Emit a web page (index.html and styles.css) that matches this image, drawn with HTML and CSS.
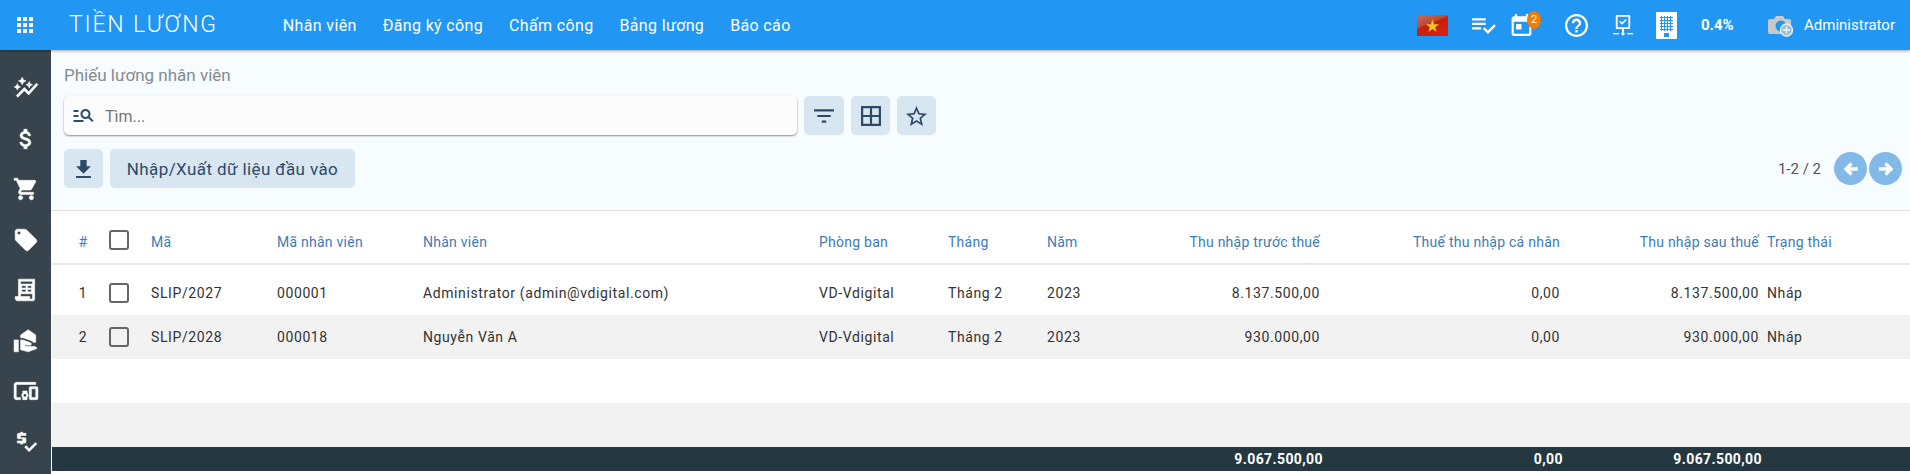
FILE: index.html
```html
<!DOCTYPE html>
<html lang="vi">
<head>
    <meta charset="UTF-8">
    <meta name="viewport" content="width=device-width, initial-scale=1.0">
    <title>Tiền lương</title>
    <link rel="stylesheet" href="styles.css">
</head>
<body>
    <header class="topbar">
        <svg class="apps-icon" viewBox="3 3 18 18"><path d="M4 8h4V4H4v4zm6 12h4v-4h-4v4zm-6 0h4v-4H4v4zm0-6h4v-4H4v4zm6 0h4v-4h-4v4zm6-10v4h4V4h-4zm-6 4h4V4h-4v4zm6 6h4v-4h-4v4zm0 6h4v-4h-4v4z"/></svg>
        <div class="app-title">TIỀN LƯƠNG</div>
        <nav class="nav">
            <a>Nhân viên</a>
            <a>Đăng ký công</a>
            <a>Chấm công</a>
            <a>Bảng lương</a>
            <a>Báo cáo</a>
        </nav>
        <div class="top-right">
            <svg class="flag" viewBox="0 0 31 21">
                <defs>
                    <linearGradient id="flagbg" x1="0" y1="0" x2="0.6" y2="1">
                        <stop offset="0" stop-color="#c9685a"/>
                        <stop offset="0.45" stop-color="#bf4a38"/>
                        <stop offset="0.5" stop-color="#c41f0d"/>
                        <stop offset="1" stop-color="#d6230f"/>
                    </linearGradient>
                </defs>
                <rect width="31" height="21" fill="url(#flagbg)"/>
                <polygon points="15.5,4.5 17.2,9.2 22,9.2 18.2,12.2 19.6,17 15.5,14.1 11.4,17 12.8,12.2 9,9.2 13.8,9.2" fill="#f7c520"/>
            </svg>
            <svg class="top-icon check-list" viewBox="2 5 21 15"><path d="M14 10H2v2h12v-2zm0-4H2v2h12V6zM2 16h8v-2H2v2zm19.5-4.5L23 13l-6.99 7-4.51-4.5L13 14l3.01 3 5.49-5.5z"/></svg>
            <div class="calendar">
                <svg class="top-icon" viewBox="3 1 18 20"><path d="M19 3h-1V1h-2v2H8V1H6v2H5c-1.11 0-1.99.9-1.99 2L3 19c0 1.1.89 2 2 2h14c1.1 0 2-.9 2-2V5c0-1.1-.9-2-2-2zm0 16H5V8h14v11zM7 10h5v5H7z"/></svg>
                <span class="badge">2</span>
            </div>
            <svg class="top-icon help" viewBox="2 2 20 20"><path d="M11 18h2v-2h-2v2zm1-16C6.48 2 2 6.48 2 12s4.48 10 10 10 10-4.48 10-10S17.52 2 12 2zm0 18c-4.41 0-8-3.59-8-8s3.59-8 8-8 8 3.59 8 8-3.59 8-8 8zm0-14c-2.21 0-4 1.79-4 4h2c0-1.1.9-2 2-2s2 .9 2 2c0 2-3 1.75-3 5h2c0-2.25 3-2.5 3-5 0-2.21-1.79-4-4-4z"/></svg>
            <svg class="top-icon network" viewBox="0 0 20 21">
                <path d="M4 0h12a1.2 1.2 0 0 1 1.2 1.2v11.6A1.2 1.2 0 0 1 16 14h-5v3.2H9V14H4a1.2 1.2 0 0 1-1.2-1.2V1.200A1.2 1.2 0 0 1 4 0zm.6 1.800v10.400h10.800V1.800H4.600z"/>
                <path d="M6.200 6.800l1.100-1.100 1.800 1.800 3.600-3.600 1.100 1.100-4.700 4.700z"/>
                <rect x="0" y="18" width="6" height="1.400"/><rect x="14" y="18" width="6" height="1.400"/>
                <circle cx="10" cy="18.700" r="1.700"/>
            </svg>
            <div class="building">
                <span class="windows"></span>
                <span class="door"></span>
            </div>
            <div class="percent">0.4%</div>
            <svg class="camera" viewBox="0 0 26 23">
                <path d="M2 5h4l2-3h7l2 3h4a2 2 0 0 1 2 2v11a2 2 0 0 1-2 2H2a2 2 0 0 1-2-2V7a2 2 0 0 1 2-2z" fill="#c9c9c9"/>
                <circle cx="13" cy="12" r="5.500" fill="#2196f3"/>
                <circle cx="18.500" cy="16" r="6" fill="#9ebfd9" stroke="#eef2f5" stroke-width="1.300"/>
                <path d="M18.500 12.500v7M15 16h7" stroke="#eef2f5" stroke-width="1.300"/>
            </svg>
            <div class="user">Administrator</div>
        </div>
    </header>

    <div class="main">
        <aside class="sidebar">
            <a><svg viewBox="0 0 24 24"><path d="M14.06 9.94L12 9l2.06-.94L15 6l.94 2.06L18 9l-2.06.94L15 12l-.94-2.06zM4 14l.94-2.06L7 11l-2.06-.94L4 8l-.94 2.06L1 11l2.06.94L4 14zm4.5-5l1.09-2.41L12 5.5 9.59 4.41 8.5 2 7.41 4.41 5 5.5l2.41 1.09L8.5 9zm-4 11.5l6-6.01 4 4L23 8.93l-1.41-1.41-7.09 7.97-4-4L3 19l1.5 1.5z"/></svg></a>
            <a><svg viewBox="0 0 24 24"><path d="M11.8 10.9c-2.27-.59-3-1.2-3-2.15 0-1.09 1.01-1.85 2.7-1.85 1.78 0 2.44.85 2.5 2.1h2.21c-.07-1.72-1.12-3.3-3.21-3.81V3h-3v2.16c-1.94.42-3.5 1.68-3.5 3.61 0 2.31 1.91 3.46 4.7 4.13 2.5.6 3 1.48 3 2.41 0 .69-.49 1.79-2.7 1.79-2.06 0-2.87-.92-2.98-2.1h-2.2c.12 2.19 1.76 3.42 3.68 3.83V21h3v-2.15c1.95-.37 3.5-1.5 3.5-3.55 0-2.84-2.43-3.81-4.7-4.4z"/></svg></a>
            <a><svg viewBox="0 0 24 24"><path d="M7 18c-1.1 0-1.99.9-1.99 2S5.9 22 7 22s2-.9 2-2-.9-2-2-2zM1 2v2h2l3.6 7.59-1.35 2.45c-.16.28-.25.61-.25.96 0 1.1.9 2 2 2h12v-2H7.42c-.14 0-.25-.11-.25-.25l.03-.12.9-1.63h7.45c.75 0 1.41-.41 1.75-1.03l3.58-6.49c.08-.14.12-.31.12-.48 0-.55-.45-1-1-1H5.21l-.94-2H1zm16 16c-1.1 0-1.99.9-1.99 2s.89 2 1.99 2 2-.9 2-2-.9-2-2-2z"/></svg></a>
            <a><svg viewBox="0 0 24 24"><path d="M21.41 11.58l-9-9C12.05 2.22 11.55 2 11 2H4c-1.1 0-2 .9-2 2v7c0 .55.22 1.05.59 1.42l9 9c.36.36.86.58 1.41.58.55 0 1.05-.22 1.41-.59l7-7c.37-.36.59-.86.59-1.41 0-.55-.23-1.06-.59-1.42zM5.5 7C4.67 7 4 6.33 4 5.5S4.67 4 5.5 4 7 4.67 7 5.5 6.33 7 5.500 7z"/></svg></a>
            <a><svg viewBox="0 0 24 24"><path fill-rule="evenodd" d="M5 2h15v18c0 1.200-.6 2-1.500 2H4.500C3 22 2 21 2 19.500V18h3V2zm2 2v2.500h11V4H7zm1 4v2.200h4V8H8zm5.500 0v2.200H17V8h-3.500zM8 11.500v2.200h4v-2.200H8zm5.500 0v2.200H17v-2.200h-3.500zM7 15.500V18h8.500v1.500c0 .4.100.6.300.9H18V15.500H7z"/></svg></a>
            <a><svg viewBox="0 0 24 24"><path fill-rule="evenodd" d="M1 22h4V11H1v11zm19-5h-7l-2.090-.73.33-.94L13 16h2.820c.65 0 1.180-.53 1.180-1.180 0-.49-.31-.93-.77-1.110L8.970 11H7v9.020L14 22l8-3c-.01-1.100-.89-2-2-2zM14 1.500l-7 5V9h2c.26 0 .58.060.74.120l7.210 2.660c.68.250 1.200.8 1.460 1.450H21V6.500l-7-5z"/></svg></a>
            <a><svg viewBox="0 0 24 24"><path d="M3 6h18V4H3c-1.100 0-2 .9-2 2v12c0 1.100.9 2 2 2h4v-2H3V6zm10 6H9v1.780c-.61.55-1 1.330-1 2.220s.39 1.670 1 2.220V20h4v-1.780c.61-.55 1-1.340 1-2.220s-.39-1.670-1-2.220V12zm-2 5.500c-.83 0-1.500-.67-1.500-1.500s.67-1.500 1.500-1.500 1.500.67 1.500 1.500-.67 1.500-1.500 1.500zM22 8h-6c-.5 0-1 .5-1 1v10c0 .5.5 1 1 1h6c.5 0 1-.5 1-1V9c0-.5-.5-1-1-1zm-1 10h-4v-8h4v8z"/></svg></a>
            <a><svg viewBox="0 0 24 24"><path d="M11 13c.55 0 1-.45 1-1V9c0-.55-.45-1-1-1H7V6h5V4H9V3H7v1H5c-.55 0-1 .45-1 1v3c0 .55.45 1 1 1h4v2H4v2h3v1h2v-1h2zm9.590-.5l-5.660 5.660-2.830-2.830-1.410 1.410 4.240 4.250 7.070-7.070z"/></svg></a>
        </aside>

        <div class="content">
            <section class="panel">
                <div class="page-title">Phiếu lương nhân viên</div>
                <div class="search-row">
                    <div class="search-box">
                        <svg class="search-icon" viewBox="2 6 20 14"><path d="M7 9H2V7h5v2zm0 3H2v2h5v-2zm13.590 7l-3.830-3.830c-.8.52-1.740.83-2.760.83-2.760 0-5-2.240-5-5s2.240-5 5-5 5 2.240 5 5c0 1.020-.31 1.960-.83 2.750L22 17.590 20.590 19zM17 11c0-1.650-1.350-3-3-3s-3 1.350-3 3 1.350 3 3 3 3-1.350 3-3zM2 19h10v-2H2v2z"/></svg>
                        <span class="search-text">Tìm...</span>
                    </div>
                    <button class="btn-icon filter-btn"><svg viewBox="3 6 18 12" class="icon-filter"><path d="M10 18h4v-2h-4v2zM3 6v2h18V6H3zm3 7h12v-2H6v2z"/></svg></button>
                    <button class="btn-icon"><svg viewBox="3 3 18 18" class="icon-grid"><path d="M3 3v18h18V3H3zm8 16H5v-6h6v6zm0-8H5V5h6v6zm8 8h-6v-6h6v6zm0-8h-6V5h6v6z"/></svg></button>
                    <button class="btn-icon"><svg viewBox="2 2 20 19" class="icon-star"><path d="M22 9.240l-7.190-.62L12 2 9.190 8.630 2 9.240l5.460 4.730L5.820 21 12 17.270 18.180 21l-1.630-7.030L22 9.240zM12 15.400l-3.760 2.270 1-4.280-3.320-2.880 4.380-.38L12 6.100l1.710 4.040 4.380.38-3.320 2.880 1 4.280L12 15.400z"/></svg></button>
                </div>
                <div class="action-row">
                    <button class="btn-icon"><svg viewBox="5 3 14 17" class="icon-download"><path d="M19 9h-4V3H9v6H5l7 7 7-7zM5 18v2h14v-2H5z"/></svg></button>
                    <button class="btn-text">Nhập/Xuất dữ liệu đầu vào</button>
                    <div class="pager">
                        <span class="pager-text">1-2 / 2</span>
                        <span class="pager-btn"><svg viewBox="0 0 16 16"><path d="M15 8H4M8.500 2.500L3 8l5.500 5.500" fill="none" stroke="#fff" stroke-width="3.400"/></svg></span>
                        <span class="pager-btn"><svg viewBox="0 0 16 16"><path d="M1 8h11M7.500 2.500L13 8l-5.500 5.500" fill="none" stroke="#fff" stroke-width="3.400"/></svg></span>
                    </div>
                </div>
            </section>

            <table class="data-table">
                <colgroup>
                    <col class="c-no"><col class="c-check"><col class="c-code"><col class="c-empcode"><col class="c-name"><col class="c-dept"><col class="c-month"><col class="c-year"><col class="c-gross"><col class="c-tax"><col class="c-net"><col>
                </colgroup>
                <thead>
                    <tr>
                        <th class="no">#</th>
                        <th class="check"><span class="checkbox"></span></th>
                        <th>Mã</th>
                        <th>Mã nhân viên</th>
                        <th>Nhân viên</th>
                        <th>Phòng ban</th>
                        <th>Tháng</th>
                        <th>Năm</th>
                        <th class="num">Thu nhập trước thuế</th>
                        <th class="num">Thuế thu nhập cá nhân</th>
                        <th class="num">Thu nhập sau thuế</th>
                        <th class="status">Trạng thái</th>
                    </tr>
                </thead>
                <tbody>
                    <tr>
                        <td class="no">1</td>
                        <td class="check"><span class="checkbox"></span></td>
                        <td>SLIP/2027</td>
                        <td>000001</td>
                        <td>Administrator (admin@vdigital.com)</td>
                        <td>VD-Vdigital</td>
                        <td>Tháng 2</td>
                        <td>2023</td>
                        <td class="num">8.137.500,00</td>
                        <td class="num">0,00</td>
                        <td class="num">8.137.500,00</td>
                        <td class="status">Nháp</td>
                    </tr>
                    <tr class="shade">
                        <td class="no">2</td>
                        <td class="check"><span class="checkbox"></span></td>
                        <td>SLIP/2028</td>
                        <td>000018</td>
                        <td>Nguyễn Văn A</td>
                        <td>VD-Vdigital</td>
                        <td>Tháng 2</td>
                        <td>2023</td>
                        <td class="num">930.000,00</td>
                        <td class="num">0,00</td>
                        <td class="num">930.000,00</td>
                        <td class="status">Nháp</td>
                    </tr>
                    <tr><td colspan="12"></td></tr>
                    <tr class="shade"><td colspan="12"></td></tr>
                </tbody>
                <tfoot>
                    <tr>
                        <td colspan="8"></td>
                        <td class="num">9.067.500,00</td>
                        <td class="num">0,00</td>
                        <td class="num">9.067.500,00</td>
                        <td></td>
                    </tr>
                </tfoot>
            </table>
        </div>
    </div>
</body>
</html>
```

FILE: styles.css
```css
* {
    box-sizing: border-box;
}

html, body {
    height: 100%;
}

body {
    margin: 0;
    font-family: 'Roboto', 'Liberation Sans', sans-serif;
    font-size: 14px;
    color: #333;
    background-color: #fff;
    overflow: hidden;
}

/* top bar */
.topbar {
    height: 50px;
    background-color: #2196f3;
    box-shadow: 0 1px 3px rgba(0, 0, 0, 0.35);
    display: flex;
    align-items: center;
    color: #fff;
    padding: 0 15px 0 16px;
    position: relative;
    z-index: 2;
}

.apps-icon {
    width: 18px;
    height: 18px;
    fill: #fff;
    margin-top: -1px;
}

.app-title {
    font-size: 23px;
    letter-spacing: 1.8px;
    font-weight: 300;
    margin-left: 35px;
    margin-top: -2px;
}

.nav {
    display: flex;
    gap: 26px;
    margin-left: 65px;
    font-size: 16px;
    letter-spacing: 0.35px;
}

.top-right {
    margin-left: auto;
    display: flex;
    align-items: center;
}

.flag {
    width: 31px;
    height: 21px;
    margin-right: 24px;
}

.top-icon {
    fill: #fff;
    display: block;
}

.check-list {
    width: 24px;
    height: 17px;
    margin-right: 15px;
}

.calendar {
    position: relative;
    margin-right: 33px;
}

.calendar .top-icon {
    width: 21px;
    height: 22px;
}

.badge {
    position: absolute;
    top: -3px;
    left: 16px;
    width: 14px;
    height: 18px;
    border-radius: 50%;
    background-color: #f57c00;
    font-size: 11px;
    line-height: 17px;
    text-align: center;
}

.help {
    width: 23px;
    height: 23px;
    margin-right: 25px;
}

.network {
    width: 20px;
    height: 21px;
    margin-right: 23px;
}

.building {
    width: 21px;
    height: 27px;
    background-color: #fff;
    border-radius: 1px;
    position: relative;
    margin-right: 24px;
}

.windows {
    position: absolute;
    top: 4px;
    left: 4px;
    width: 13px;
    height: 15px;
    background-image: radial-gradient(circle, #2196f3 1px, transparent 1.1px);
    background-size: 3px 3px;
}

.door {
    position: absolute;
    left: 8px;
    bottom: 2px;
    width: 5px;
    height: 4px;
    background-color: #2196f3;
}

.percent {
    font-size: 15px;
    font-weight: 700;
    width: 67px;
}

.camera {
    width: 26px;
    height: 23px;
    margin-right: 10px;
}

.user {
    font-size: 15px;
}

.main {
    display: flex;
    height: 424px;
}

/* left icons */
.sidebar {
    width: 51px;
    flex-shrink: 0;
    background-color: #37444d;
    padding-top: 13px;
}

.sidebar a {
    height: 50.5px;
    display: flex;
    align-items: center;
    justify-content: center;
}

.sidebar svg {
    width: 26px;
    height: 26px;
    fill: #fff;
    stroke: #fff;
    stroke-width: 0.5;
}

.content {
    flex: 1;
    min-width: 0;
}

/* search panel */
.panel {
    height: 161px;
    background-color: #f7fcff;
    border-bottom: 1px solid #e0e0e0;
    padding: 15px 8px 0 13px;
}

.page-title {
    font-size: 17px;
    color: #858a8f;
    height: 31px;
    line-height: 21px;
}

.search-row {
    display: flex;
    gap: 7px;
    height: 39px;
}

.search-box {
    width: 733px;
    background-color: #fcfcfc;
    border-radius: 5px;
    box-shadow: 0 1px 2px rgba(0, 0, 0, 0.45);
    display: flex;
    align-items: center;
    padding-left: 9px;
}

.search-icon {
    width: 21px;
    height: 14px;
    fill: #2d4a68;
}

.search-text {
    font-size: 16px;
    color: #767676;
    margin: 1px 0 0 11px;
}

.btn-icon {
    width: 39px;
    height: 39px;
    border: none;
    border-radius: 5px;
    background-color: #d7e6f1;
    padding: 0;
    display: flex;
    align-items: center;
    justify-content: center;
}

.filter-btn {
    width: 40px;
}

.btn-icon svg {
    fill: #2d4a68;
}

.icon-filter {
    width: 20px;
    height: 14px;
}

.icon-grid {
    width: 20px;
    height: 20px;
}

.icon-star {
    width: 21px;
    height: 20px;
}

.icon-download {
    width: 15px;
    height: 18px;
}

.action-row {
    display: flex;
    align-items: center;
    gap: 7px;
    margin-top: 14px;
}

.btn-text {
    height: 39px;
    width: 245px;
    border: none;
    border-radius: 5px;
    background-color: #d7e6f1;
    color: #2d4a68;
    font-family: inherit;
    font-size: 17px;
    letter-spacing: 0.4px;
    padding: 0;
}

.pager {
    margin-left: auto;
    display: flex;
    align-items: center;
    gap: 2px;
}

.pager-text {
    font-size: 15px;
    color: #555;
    margin-right: 11px;
}

.pager-btn {
    width: 33px;
    height: 33px;
    border-radius: 50%;
    background-color: #82b9e8;
    display: flex;
    align-items: center;
    justify-content: center;
}

.pager-btn svg {
    width: 16px;
    height: 16px;
}

/* table */
.data-table {
    width: calc(100% - 1px);
    margin-left: 1px;
    table-layout: fixed;
    border-collapse: collapse;
    font-size: 14px;
    letter-spacing: 0.6px;
}

.c-no { width: 46px; }
.c-check { width: 45px; }
.c-code { width: 126px; }
.c-empcode { width: 146px; }
.c-name { width: 396px; }
.c-dept { width: 129px; }
.c-month { width: 99px; }
.c-year { width: 97px; }
.c-gross { width: 192px; }
.c-tax { width: 240px; }
.c-net { width: 199px; }

.data-table th,
.data-table td {
    padding: 0 8px;
    text-align: left;
    font-weight: 400;
}

.data-table th {
    height: 53px;
    color: #3f7cb0;
    letter-spacing: 0.25px;
    border-bottom: 2px solid #e4e6e8;
    padding-top: 9px;
}

.data-table tbody tr {
    height: 44px;
}

.data-table tbody tr:first-child {
    height: 51px;
}

.data-table tbody tr:first-child td {
    padding-top: 5px;
}

.data-table .shade {
    background-color: #f2f2f2;
}

.data-table .no {
    padding: 0 0 0 16px;
    text-align: center;
}

.data-table th.no {
    padding-top: 9px;
}

.data-table .check {
    padding: 0 0 0 11px;
}

.data-table th.check {
    padding-top: 5px;
}

.data-table .num {
    text-align: right;
}

.data-table .status {
    padding-left: 0;
}

.checkbox {
    display: block;
    width: 20px;
    height: 20px;
    border: 2px solid #666;
    border-radius: 3px;
}

.data-table tfoot td {
    height: 24px;
    background-color: #253740;
    color: #fff;
    font-weight: 700;
    letter-spacing: 0.4px;
}

.data-table tfoot .num {
    padding-right: 5px;
}
```
